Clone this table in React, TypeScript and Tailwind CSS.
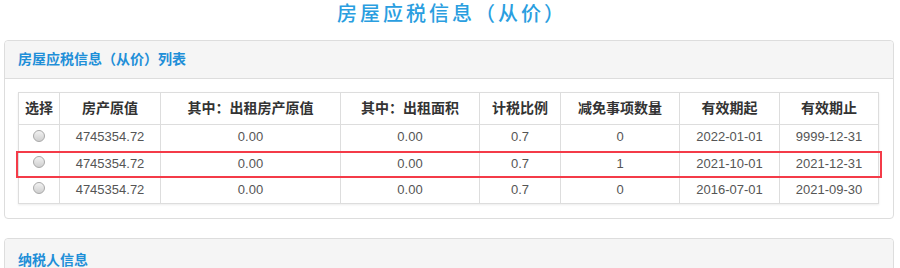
import React from "react";

const rows = [
  ["4745354.72", "0.00", "0.00", "0.7", "0", "2022-01-01", "9999-12-31"],
  ["4745354.72", "0.00", "0.00", "0.7", "1", "2021-10-01", "2021-12-31"],
  ["4745354.72", "0.00", "0.00", "0.7", "0", "2016-07-01", "2021-09-30"],
];

const heads = ["选择", "房产原值", "其中：出租房产原值", "其中：出租面积", "计税比例", "减免事项数量", "有效期起", "有效期止"];
const widths = [41, 101, 180, 139, 81, 119, 100, 99];

function Radio() {
  return (
    <span className="inline-block w-[12px] h-[12px] rounded-full border border-[#a9a9a9] bg-gradient-to-b from-[#f2f2f2] to-[#cfcfcf] align-middle relative top-[-3px]" />
  );
}

export default function App() {
  const font = { fontFamily: '"Liberation Sans", "Noto Sans CJK SC", sans-serif' };
  return (
    <div className="w-[900px] h-[268px] overflow-hidden bg-white" style={font}>
      {/* TITLE */}
      <div className="h-[40px] flex justify-center pt-[2px] pl-[4px]">
        <h1 className="text-[20px] leading-[24px] tracking-[3px] text-[#2a9ee0] font-medium">
          房屋应税信息（从价）
        </h1>
      </div>

      {/* LIST PANEL */}
      <div className="ml-[4px] mr-[6px] border border-[#dddddd] rounded-[4px]">
        <div className="h-[38px] bg-[#f5f5f5] border-b border-[#dddddd] flex items-center px-[13px] rounded-t-[4px]">
          <span className="text-[14px] font-bold text-[#1f8fd8]">房屋应税信息（从价）列表</span>
        </div>
        <div className="pl-[13px] pr-[15px] pt-[13px] pb-[14px]">
          <div className="relative">
            <table className="table-fixed border-collapse w-[860px] shadow-[0_1px_2px_rgba(0,0,0,0.08)]">
              <colgroup>
                {widths.map((w, i) => (
                  <col key={i} style={{ width: w }} />
                ))}
              </colgroup>
              <thead>
                <tr className="h-[32px]">
                  {heads.map((h) => (
                    <th key={h} className="border border-[#dddddd] text-[14px] font-bold text-[#333333] text-center p-0">
                      {h}
                    </th>
                  ))}
                </tr>
              </thead>
              <tbody>
                {rows.map((r, i) => (
                  <tr key={i} className={i === 0 ? "h-[27px]" : "h-[26px]"}>
                    <td className="border border-[#dddddd] text-center p-0">
                      <Radio />
                    </td>
                    {r.map((c, j) => (
                      <td key={j} className="border border-[#dddddd] text-center text-[13px] text-[#555555] p-0 pb-[2px]">
                        {c}
                      </td>
                    ))}
                  </tr>
                ))}
              </tbody>
            </table>
            {/* highlighted row */}
            <div className="absolute left-[-2px] top-[59px] w-[866px] h-[27px] border-2 border-[#f43b48] pointer-events-none" />
          </div>
        </div>
      </div>

      {/* TAXPAYER PANEL */}
      <div className="ml-[4px] mr-[6px] mt-[19px] border border-[#dddddd] rounded-[4px]">
        <div className="h-[38px] bg-[#f5f5f5] flex items-center px-[13px] rounded-t-[4px]">
          <span className="text-[14px] font-bold text-[#1f8fd8] pt-[4px]">纳税人信息</span>
        </div>
      </div>
    </div>
  );
}
